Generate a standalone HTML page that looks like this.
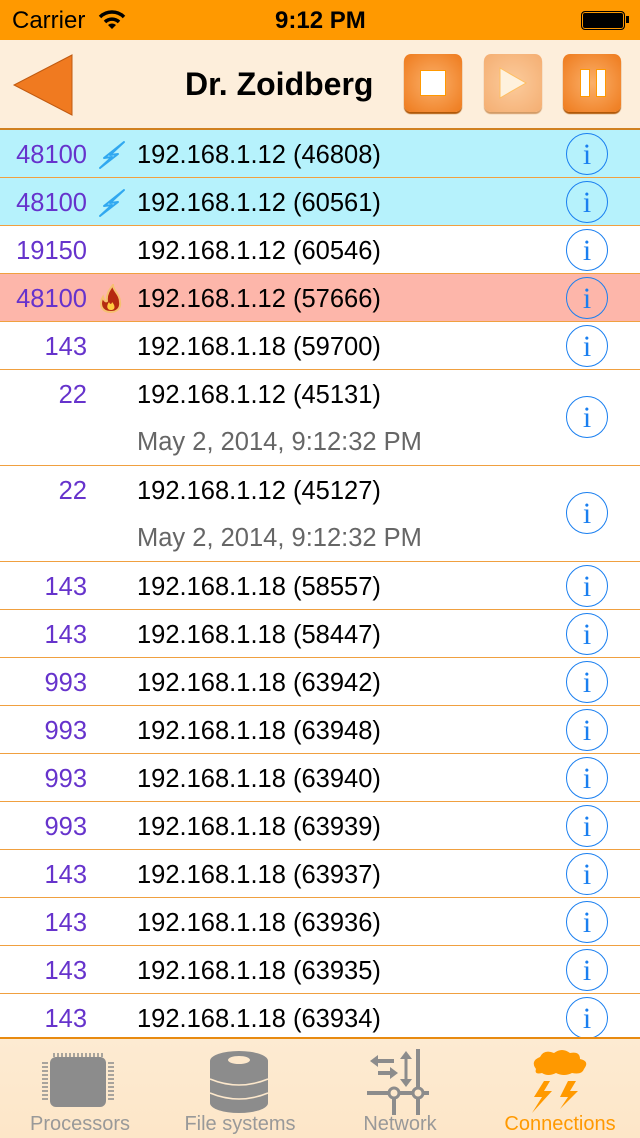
<!DOCTYPE html><html><head><style>
body{margin:0;width:640px;height:1136px;overflow:hidden;font-family:"Liberation Sans",sans-serif;background:#fff;position:relative}
.sb{position:absolute;top:0;left:0;width:640px;height:40px;background:#ff9900;font-size:24px}
.nav{position:absolute;top:40px;left:0;width:640px;height:88px;background:#fdeedb;border-bottom:2px solid #d08020}
.row{position:absolute;left:0;width:640px;height:47px;border-bottom:1px solid #f0a040;font-size:25.5px}
.n{position:absolute;right:553px;top:11px;color:#6633cc}
.ip{position:absolute;left:137px;top:11px;color:#000}
.d{position:absolute;left:137px;top:58px;color:#666}
.i{position:absolute;left:566px;width:40px;height:40px;border:1.5px solid #1a7ff0;border-radius:50%;color:#1a7ff0;font-family:"Liberation Serif",serif;font-size:30px;text-align:center;line-height:42px}
.btn{position:absolute;top:14px;width:58px;height:58px;border-radius:7px;background:radial-gradient(circle,#fbb06a,#ee7a1c);box-shadow:0 2px 1px #b05808}
.tab{position:absolute;top:1037px;left:0;width:640px;height:99px;background:linear-gradient(#fdebd2,#fde6c8);border-top:2px solid #e88a10}
.tl{position:absolute;top:74px;font-size:20px;color:#999;text-align:center;width:160px}
</style></head><body>
<div class="sb"><span style="position:absolute;left:12px;top:7px">Carrier</span>
<svg style="position:absolute;left:98px;top:10px" width="28" height="20"><path d="M2 7 A17 17 0 0 1 26 7" stroke="#000" stroke-width="3.5" fill="none"/><path d="M7 12 A10 10 0 0 1 21 12" stroke="#000" stroke-width="3.5" fill="none"/><path d="M14 19 L10 15 A6 6 0 0 1 18 15Z" fill="#000"/></svg>
<span style="position:absolute;left:275px;top:7px;font-weight:bold">9:12 PM</span>
<div style="position:absolute;left:581px;top:11px;width:42px;height:17px;background:#000;border:1px solid #000;border-radius:4px;box-shadow:inset 0 0 0 1px #f90"></div><div style="position:absolute;left:626px;top:16px;width:3px;height:7px;background:#000"></div></div>
<div class="nav">
<svg style="position:absolute;left:12px;top:14px" width="62" height="62"><path d="M60 1 L2 31 L60 61Z" fill="#f07a20" stroke="#c05a10" stroke-width="1"/></svg>
<span style="position:absolute;left:185px;top:26px;font-size:32px;font-weight:bold">Dr. Zoidberg</span>
<div class="btn" style="left:404px"><div style="position:absolute;left:16px;top:16px;width:24px;height:24px;background:#fff;border:1px solid #f90"></div></div>
<div class="btn" style="left:484px;opacity:.55"><svg style="position:absolute;left:14px;top:12px" width="32" height="34"><path d="M2 2 L28 17 L2 32Z" fill="#fff4e0" stroke="#f90"/></svg></div>
<div class="btn" style="left:563px"><div style="position:absolute;left:17px;top:15px;width:8px;height:26px;background:#fff;border:1px solid #f90"></div><div style="position:absolute;left:33px;top:15px;width:8px;height:26px;background:#fff;border:1px solid #f90"></div></div>
</div>

<div class="row" style="top:130px;background:#b6f2fc"><span class="n">48100</span><svg style="position:absolute;left:96px;top:10px" width="32" height="30"><path d="M28 2 L8 18 L16 17 L4 28 L22 14 L14 15Z" fill="#bff4ff" stroke="#30a8f0" stroke-width="2" stroke-linejoin="round"/></svg><span class="ip">192.168.1.12 (46808)</span><div class="i" style="top:3px">i</div></div>
<div class="row" style="top:178px;background:#b6f2fc"><span class="n">48100</span><svg style="position:absolute;left:96px;top:10px" width="32" height="30"><path d="M28 2 L8 18 L16 17 L4 28 L22 14 L14 15Z" fill="#bff4ff" stroke="#30a8f0" stroke-width="2" stroke-linejoin="round"/></svg><span class="ip">192.168.1.12 (60561)</span><div class="i" style="top:3px">i</div></div>
<div class="row" style="top:226px"><span class="n">19150</span><span class="ip">192.168.1.12 (60546)</span><div class="i" style="top:3px">i</div></div>
<div class="row" style="top:274px;background:#fdb6aa"><span class="n">48100</span><svg style="position:absolute;left:98px;top:10px" width="26" height="30"><path d="M13 28 C3 28 1 20 5 13 C6 17 8 18 9 17 C8 10 12 5 15 1 C15 7 22 10 22 18 C23 24 19 28 13 28Z" fill="#b52a10" stroke="#f6c070" stroke-width="2"/><path d="M13 26 C9 26 8 22 11 18 C12 21 14 20 14 18 C17 21 18 26 13 26Z" fill="#ffcc40"/></svg><span class="ip">192.168.1.12 (57666)</span><div class="i" style="top:3px">i</div></div>
<div class="row" style="top:322px"><span class="n">143</span><span class="ip">192.168.1.18 (59700)</span><div class="i" style="top:3px">i</div></div>
<div class="row" style="top:370px;height:95px"><span class="n">22</span><span class="ip">192.168.1.12 (45131)</span><span class="d">May 2, 2014, 9:12:32 PM</span><div class="i" style="top:26px">i</div></div>
<div class="row" style="top:466px;height:95px"><span class="n">22</span><span class="ip">192.168.1.12 (45127)</span><span class="d">May 2, 2014, 9:12:32 PM</span><div class="i" style="top:26px">i</div></div>
<div class="row" style="top:562px"><span class="n">143</span><span class="ip">192.168.1.18 (58557)</span><div class="i" style="top:3px">i</div></div>
<div class="row" style="top:610px"><span class="n">143</span><span class="ip">192.168.1.18 (58447)</span><div class="i" style="top:3px">i</div></div>
<div class="row" style="top:658px"><span class="n">993</span><span class="ip">192.168.1.18 (63942)</span><div class="i" style="top:3px">i</div></div>
<div class="row" style="top:706px"><span class="n">993</span><span class="ip">192.168.1.18 (63948)</span><div class="i" style="top:3px">i</div></div>
<div class="row" style="top:754px"><span class="n">993</span><span class="ip">192.168.1.18 (63940)</span><div class="i" style="top:3px">i</div></div>
<div class="row" style="top:802px"><span class="n">993</span><span class="ip">192.168.1.18 (63939)</span><div class="i" style="top:3px">i</div></div>
<div class="row" style="top:850px"><span class="n">143</span><span class="ip">192.168.1.18 (63937)</span><div class="i" style="top:3px">i</div></div>
<div class="row" style="top:898px"><span class="n">143</span><span class="ip">192.168.1.18 (63936)</span><div class="i" style="top:3px">i</div></div>
<div class="row" style="top:946px"><span class="n">143</span><span class="ip">192.168.1.18 (63935)</span><div class="i" style="top:3px">i</div></div>
<div class="row" style="top:994px"><span class="n">143</span><span class="ip">192.168.1.18 (63934)</span><div class="i" style="top:3px">i</div></div>

<div class="tab">
<svg style="position:absolute;left:40px;top:12px" width="76" height="62"><rect x="10" y="6" width="56" height="50" rx="6" fill="#8c8c8c"/><path d="M14 2v58M18 2v58M22 2v58M26 2v58M30 2v58M34 2v58M38 2v58M42 2v58M46 2v58M50 2v58M54 2v58M58 2v58M62 2v58" stroke="#8c8c8c" stroke-width="1.5" stroke-dasharray="4 54"/><path d="M2 12h72M2 16h72M2 20h72M2 24h72M2 28h72M2 32h72M2 36h72M2 40h72M2 44h72M2 48h72" stroke="#8c8c8c" stroke-width="1.5" stroke-dasharray="6 60 6"/></svg>
<svg style="position:absolute;left:208px;top:10px" width="62" height="66"><ellipse cx="31" cy="54" rx="29" ry="10" fill="#8c8c8c"/><rect x="2" y="12" width="58" height="42" fill="#8c8c8c"/><ellipse cx="31" cy="12" rx="29" ry="10" fill="#8c8c8c"/><ellipse cx="31" cy="11" rx="11" ry="4" fill="#fde8cc"/><path d="M2 30 Q31 42 60 30M2 44 Q31 56 60 44" stroke="#fde8cc" stroke-width="1.5" fill="none"/></svg>
<svg style="position:absolute;left:366px;top:8px" width="66" height="70"><g fill="#8c8c8c" stroke="#8c8c8c"><path d="M52 2v66M28 46v22M1 46h62" stroke-width="4"/><circle cx="28" cy="46" r="5" fill="#fde8cc" stroke-width="3"/><circle cx="52" cy="46" r="5" fill="#fde8cc" stroke-width="3"/><path d="M40 8v28" stroke-width="3"/><path d="M34 12l6-8 6 8zM34 32l6 8 6-8z" stroke="none"/><path d="M12 14h16M12 26h14" stroke-width="4"/><path d="M4 14l8-6v12zM32 26l-8-6v12z" stroke="none"/></g></svg>
<svg style="position:absolute;left:528px;top:8px" width="64" height="68"><path d="M8 22 Q2 14 12 10 Q16 2 26 6 Q34 0 42 6 Q52 4 52 12 Q62 14 56 22 Q54 28 44 26 Q36 30 28 26 Q20 30 14 26 Q6 28 8 22Z" fill="#ff9900"/><path d="M16 34 L6 50 L14 50 L4 66 L24 44 L16 44 L22 34Z" fill="#ff9900"/><path d="M40 34 L32 50 L40 50 L32 62 L50 44 L42 44 L48 34Z" fill="#ff9900"/></svg>
<div class="tl" style="left:0">Processors</div><div class="tl" style="left:160px">File systems</div><div class="tl" style="left:320px">Network</div><div class="tl" style="left:480px;color:#ff9900">Connections</div>
</div>
</body></html>
